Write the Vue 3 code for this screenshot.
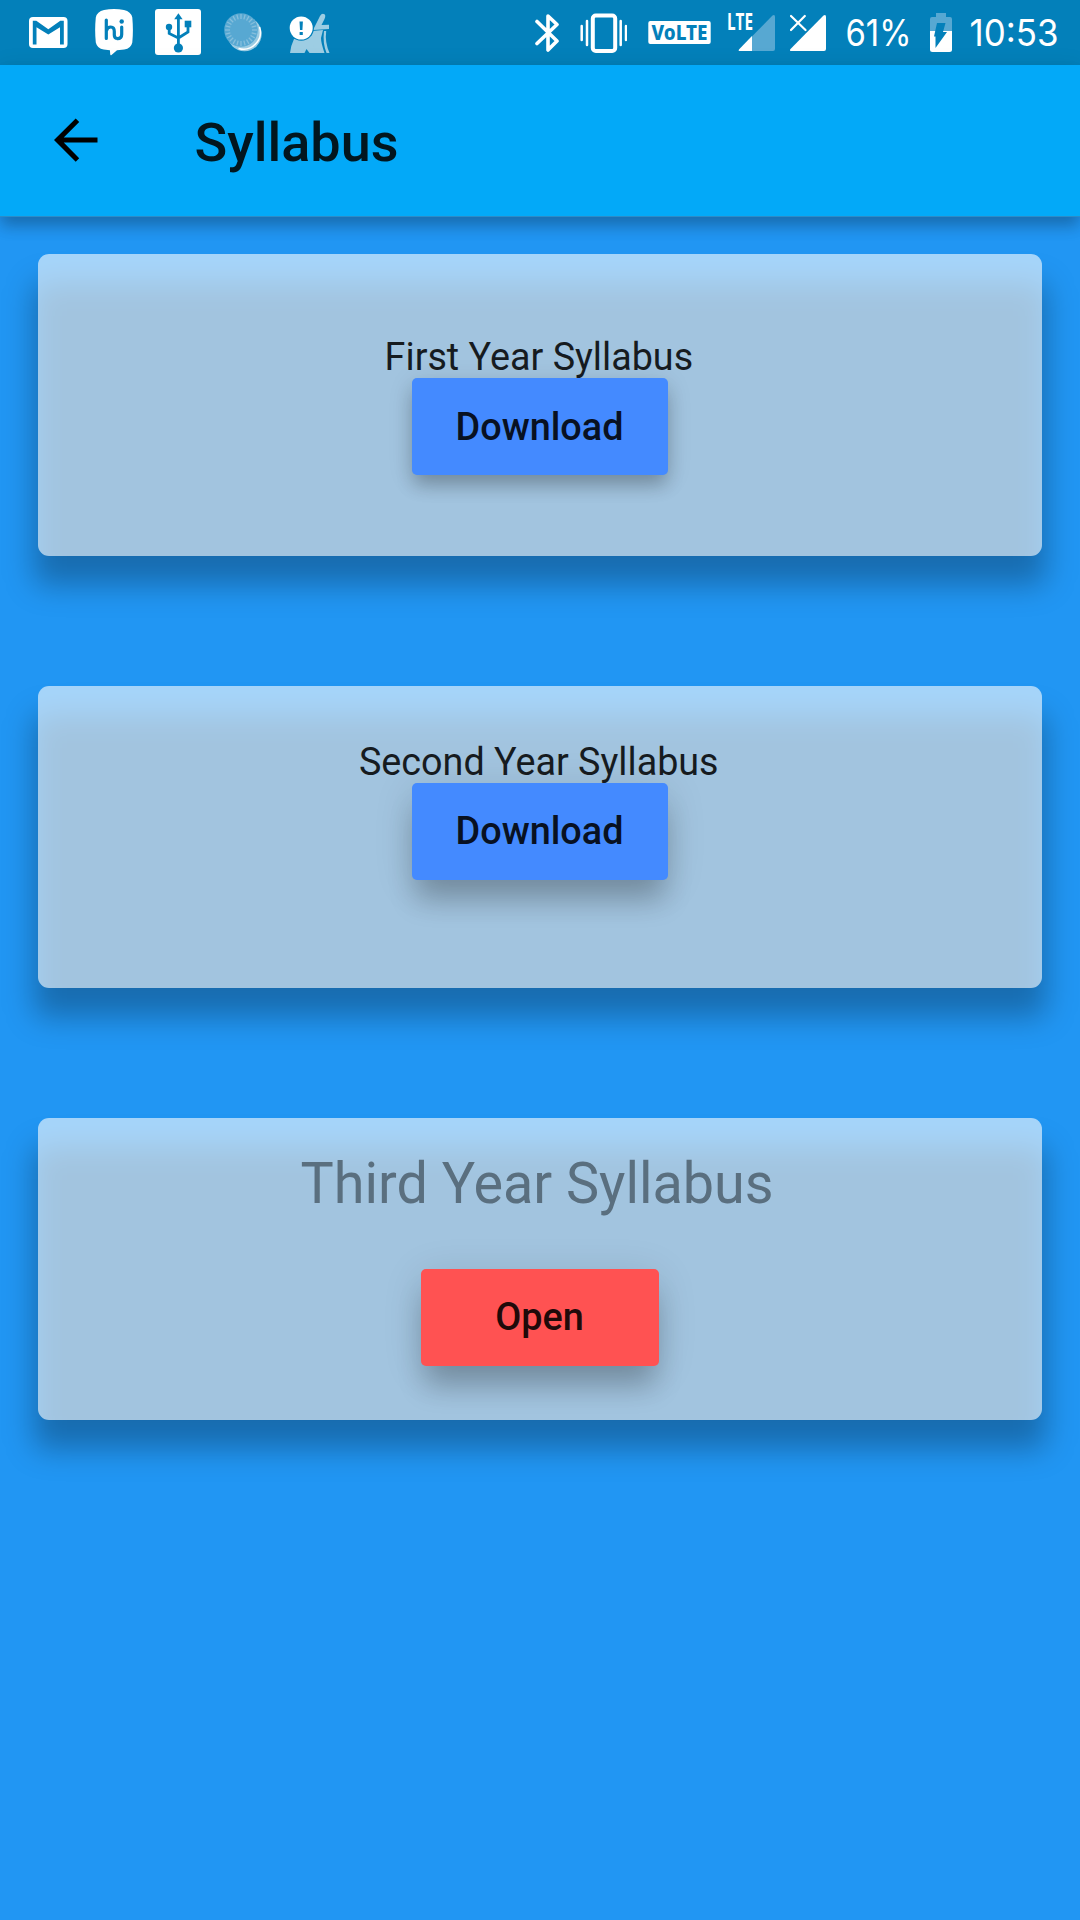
<script setup>
const cards = [
  { title: 'First Year Syllabus', action: 'Download', variant: 'first' },
  { title: 'Second Year Syllabus', action: 'Download', variant: 'second' },
  { title: 'Third Year Syllabus', action: 'Open', variant: 'third' },
]
const ticks = Array.from({ length: 24 }, (_, i) => i * 15)
</script>

<template>
  <div class="screen">
    <header class="status">
      <div class="group left">
        <svg width="39" height="65" viewBox="29 0 39 65">
          <rect x="29" y="17" width="38.500" height="31" rx="4" fill="#fff" />
          <path d="M32.800 44.500V20.700h3.500l12 8.500 12-8.500h3.500v23.800h-3.800V27.300L48.300 34.500 36.500 27.300v17.200z" fill="#0380ba" />
        </svg>
        <svg width="39" height="65" viewBox="95 0 39 65">
          <path d="M104 10q10-2 20 0 7 1.500 8.300 7.500 1.200 13 0 25-1.300 6-8 7.100l-7.300.7-5.500 4.700q-1.200.8-1.300-1l-.3-3.700-6.200-.7q-6.500-1-7.900-7.100-1.300-12 0-25Q97 11.500 104 10z" fill="#fff" />
          <g fill="none" stroke="#0380ba" stroke-width="3.200" stroke-linecap="round" stroke-linejoin="round">
            <path d="M106.300 20v18.500M106.300 31q1-4 4.500-4 3.500 0 3.500 4.500v3.500q0 3.500 3.200 3.500 4.200 0 4.200-4v-7.500M121.700 34q0 5-4.500 4.700" />
          </g>
          <circle cx="121.700" cy="21.500" r="2.200" fill="#0380ba" />
        </svg>
        <svg width="46" height="65" viewBox="155 0 46 65">
          <rect x="155" y="9" width="46" height="46" rx="3" fill="#fff" />
          <g fill="none" stroke="#0380ba" stroke-width="2.800">
            <path d="M178.400 47V18M169.200 27v6.500l9.200 4.500M188 25v7l-9.600 6" />
          </g>
          <path d="M178.400 13.300l4.200 6h-8.400z" fill="#0380ba" />
          <rect x="184.700" y="20.700" width="6.600" height="6.600" fill="#0380ba" />
          <circle cx="169" cy="27" r="3.200" fill="#0380ba" />
          <circle cx="178.400" cy="48" r="4.600" fill="#0380ba" />
        </svg>
        <svg width="38" height="65" viewBox="224 0 38 65">
          <circle cx="244.500" cy="34" r="17.200" fill="#9ccce3" />
          <path d="M259.500 27a17 17 0 0 1-21 21.500 17 17 0 0 0 21-21.500z" fill="#fff" stroke="#fff" stroke-width="1.500" />
          <circle cx="241" cy="30" r="16.800" fill="#57a8d2" />
          <path v-for="angle in ticks" :key="angle" d="M241 14v5" :transform="`rotate(${angle} 241 30)`" stroke="#86bfdd" stroke-width="1.300" />
        </svg>
        <svg width="41" height="65" viewBox="289 0 41 65">
          <path d="M290 53q1-8 4-14l19-4 3 8q0 6 3 10z" fill="#9dcde3" />
          <path d="M313 30l7-14q2-3.500 4.500-1.800 1.500 1.300 0 4.800l-3 6 7.500-.3v4.300zM312 31l11-1-2 8q0 5 3.500 15h-8q-3-8-4.500-12zM324 31h2.200q-1.500 11 3.300 22h-3q-4-10-2.500-22z" fill="#9dcde3" />
          <path d="M304.500 53l2-4 3 4z" fill="#0380ba" />
          <circle cx="301.200" cy="28" r="12.700" fill="#0380ba" />
          <circle cx="301.200" cy="28" r="11.500" fill="#fff" />
          <path d="M299.500 21.500h3.400l-.5 8.500h-2.400zM299.600 32h3.200v3h-3.200z" fill="#0380ba" />
        </svg>
      </div>
      <div class="group right">
        <svg class="bluetooth" width="24" height="65" viewBox="535 0 24 65">
          <path d="M537 21.500l20 19.500-9 9V16l9 8.500-20 19" fill="none" stroke="#fff" stroke-width="3.600" stroke-linecap="round" stroke-linejoin="round" />
        </svg>
        <svg class="vibrate" width="47" height="65" viewBox="580 0 47 65">
          <rect x="592.800" y="15.500" width="22.400" height="35.500" rx="3" fill="none" stroke="#fff" stroke-width="4" />
          <path d="M581.700 26v14M587 21v24M620.700 21v24M626 26v14" stroke="#fff" stroke-width="2.500" stroke-linecap="round" />
        </svg>
        <svg class="volte" width="71" height="65" viewBox="644 0 71 65">
          <rect x="648.300" y="21" width="62.400" height="23" rx="2" fill="#fff" />
          <text x="651.500" y="39.800" textLength="56" lengthAdjust="spacingAndGlyphs" fill="#0380ba" font-family="'Noto Sans', sans-serif" font-weight="800" font-size="21">VoLTE</text>
        </svg>
        <svg class="lte" width="52" height="65" viewBox="724 0 52 65">
          <path d="M739 49.500L772.500 15.500q2.500-1.500 2.500 1.500V49q0 2-2 2h-33q-2 0-1-1.500z" fill="#57a8d2" />
          <path d="M739 49.500L752 36v15h-12q-2 0-1-1.500z" fill="#fff" />
          <text x="727" y="30" textLength="26" lengthAdjust="spacingAndGlyphs" fill="#fff" font-family="'Open Sans', sans-serif" font-weight="700" font-size="22.500">LTE</text>
        </svg>
        <svg class="signal" width="36" height="65" viewBox="790 0 36 65">
          <path d="M790.500 49L823.500 15.500q2.500-1.500 2.500 1.500V49q0 2-2 2h-32.500q-2.500-.2-1-2z" fill="#fff" />
          <path d="M790 15l17 16M805 15l-15.500 16" stroke="#0380ba" stroke-width="5" />
          <path d="M791 16l14.500 14M804.800 16l-13.800 14" stroke="#fff" stroke-width="2.200" stroke-linecap="round" />
        </svg>
        <svg class="percent" width="94" height="65" viewBox="832 0 94 65">
          <text x="845.500" y="46.300" textLength="66" lengthAdjust="spacingAndGlyphs">61%</text>
        </svg>
        <svg class="battery" width="22" height="65" viewBox="930 0 22 65">
          <path d="M936 13h10v4h4q2 0 2 2v12h-22V19q0-2 2-2h4z" fill="#57a8d2" />
          <path d="M930 31h22v18.500q0 2.500-2.500 2.500h-17q-2.500 0-2.500-2.500z" fill="#fff" />
          <path d="M937 23h8.500l-2.500 9h4L935.500 48v-11.500H934z" fill="#0380ba" />
        </svg>
        <svg class="clock" width="100" height="65" viewBox="964 0 100 65">
          <text x="969.500" y="46.300" textLength="89" lengthAdjust="spacingAndGlyphs">10:53</text>
        </svg>
      </div>
    </header>

    <nav class="appbar">
      <svg class="back" width="44" height="44" viewBox="0 0 44 44">
        <path d="M43.500 19.500v5H9.700l15.500 15.700-3.500 3.500L0 22 21.700.5l3.500 3.500L9.700 19.500z" />
      </svg>
      <h1>Syllabus</h1>
    </nav>

    <main>
      <section v-for="card in cards" :key="card.title" class="card" :class="card.variant">
        <h2>{{ card.title }}</h2>
        <button type="button"><span>{{ card.action }}</span></button>
      </section>
    </main>
  </div>
</template>

<style>
body { margin: 0; background: #2196f3; }
</style>

<style scoped>
.screen {
  width: 1080px;
  height: 1920px;
  overflow: hidden;
  background: #2196f3;
  font-family: Roboto, sans-serif;
  display: flex;
  flex-direction: column;
}
.status {
  height: 65px;
  flex: none;
  background: #0380ba;
  display: flex;
  justify-content: space-between;
}
.group { display: flex; }
.group svg { display: block; flex: none; }
.left { padding-left: 29px; gap: 27px; }
.left svg:nth-child(3) { margin-left: -6px; }
.left svg:nth-child(4) { margin-left: -4px; }
.right { padding-right: 16px; }
.vibrate { margin-left: 21px; }
.volte { margin-left: 17px; }
.lte { margin-left: 9px; }
.signal { margin-left: 14px; }
.percent { margin-left: 6px; }
.battery { margin-left: 4px; }
.clock { margin-left: 12px; }
.percent text, .clock text {
  font-family: Inter, sans-serif;
  font-size: 36.500px;
  fill: #fff;
}
.appbar {
  height: 151px;
  flex: none;
  background: #03a9f8;
  display: flex;
  align-items: center;
  padding-left: 54px;
  z-index: 1;
  border-bottom: 1px solid #2b8cc8;
  box-shadow: 0 10px 14px -1px rgba(0, 0, 0, 0.22), 0 3px 22px rgba(0, 0, 0, 0.1);
}
.back { fill: #000; margin-bottom: 1px; }
h1 {
  margin: 5px 0 0 96.500px;
  font-size: 54px;
  line-height: 64px;
  font-weight: 500;
  color: #02161f;
}
main {
  padding: 37px 38px;
  display: flex;
  flex-direction: column;
  gap: 129.600px;
}
.card {
  position: relative;
  isolation: isolate;
  height: 302.400px;
  border-radius: 11px;
  display: flex;
  flex-direction: column;
  align-items: center;
}
/* The translucent surface lies over its own soft drop shadow. */
.card::before,
.card::after {
  content: '';
  position: absolute;
  border-radius: 11px;
}
.card::before {
  z-index: -2;
  inset: 29px -4px -29px;
  background: rgba(0, 0, 0, 0.28);
  filter: blur(15px);
}
.card::after {
  z-index: -1;
  inset: 0;
  background: rgba(255, 255, 255, 0.6);
}
h2 {
  margin: 0;
  font-weight: 400;
  font-size: 39.700px;
  line-height: 44px;
  color: #161b1f;
  white-space: nowrap;
  transform: translate(-1.500px, 1px) scaleX(0.95);
}
button {
  border: 0;
  padding: 0;
  width: 256px;
  height: 97px;
  border-radius: 5px;
  background: #448aff;
  font: 500 39.700px/44px Roboto, sans-serif;
  color: #081122;
  box-shadow: 0 24px 28px -4px rgba(0, 0, 0, 0.22), 0 6px 40px rgba(0, 0, 0, 0.12);
}
button span { display: block; transform: translateX(-0.500px) scaleX(0.952); }
.first h2 { margin-top: 80px; }
.first button { box-shadow: 0 12px 18px -2px rgba(0, 0, 0, 0.22), 0 5px 26px rgba(0, 0, 0, 0.12); }
.second h2 { margin-top: 53px; }
.third h2 {
  margin-top: 32px;
  font-size: 56.700px;
  line-height: 66px;
  color: #5a6f7f;
  transform: translate(-2.500px, 1px) scaleX(0.983);
}
.third button {
  margin-top: 53px;
  width: 238px;
  background: #ff5252;
  color: #200a0a;
}
</style>
